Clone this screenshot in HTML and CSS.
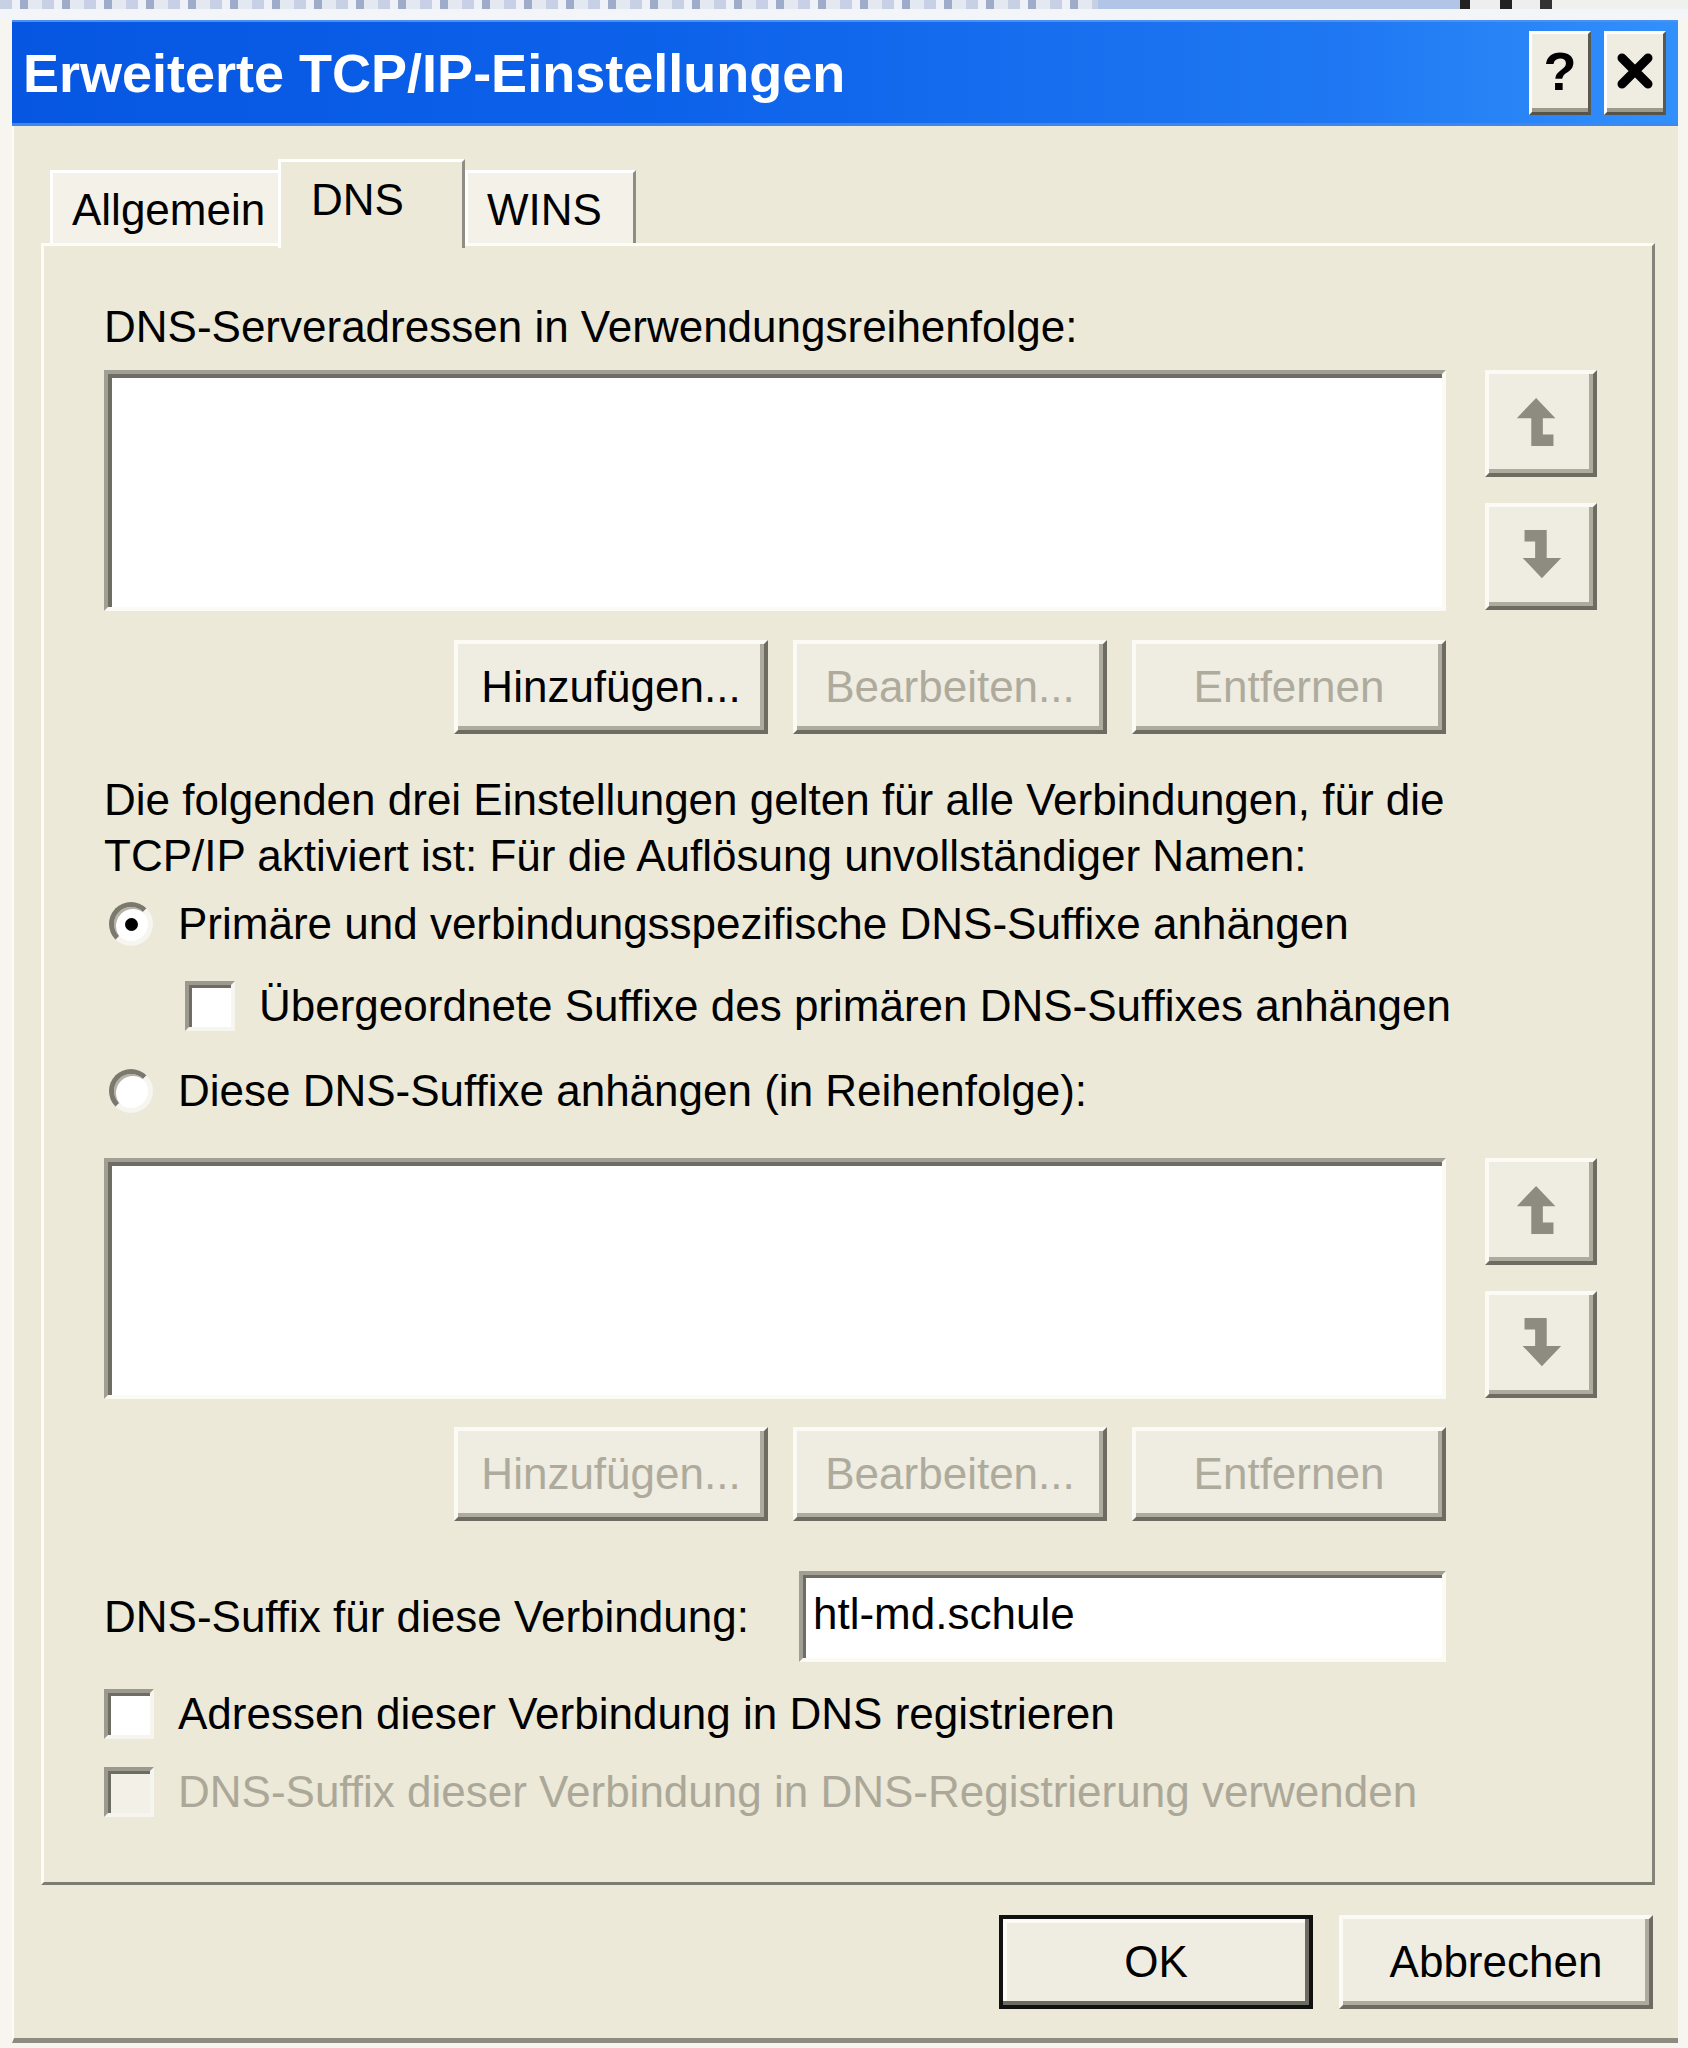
FILE: index.html
```html
<!DOCTYPE html>
<html lang="de">
<head>
<meta charset="utf-8">
<title>Erweiterte TCP/IP-Einstellungen</title>
<link rel="stylesheet" href="styles.css">
</head>
<body>
<div class="strip"><div class="strip-a"></div><div class="strip-b"></div><div class="strip-c"></div></div>
<div class="strip-gap"></div>
<div class="window">
  <div class="titlebar">
    <span class="title">Erweiterte TCP/IP-Einstellungen</span>
    <div class="tbtns">
      <div class="tbtn help">?</div>
      <div class="tbtn close">
        <svg width="38" height="36" viewBox="0 0 38 36"><path d="M6 5 L32 31 M32 5 L6 31" stroke="#000" stroke-width="9" stroke-linecap="round"/></svg>
      </div>
    </div>
  </div>
  <div class="client">
    <div class="tabs">
      <div class="tab t-allg">Allgemein</div>
      <div class="tab sel t-dns">DNS</div>
      <div class="tab t-wins">WINS</div>
    </div>
    <div class="panel">
      <div class="label">DNS-Serveradressen in Verwendungsreihenfolge:</div>
      <div class="listrow">
        <div class="listbox"></div>
        <div class="arrows">
          <div class="btn abtn"><svg width="112" height="107" viewBox="0 0 112 107"><path d="M53 29 L73 50 L60 50 L60 67 L71 67 L71 79 L48 79 L48 50 L33 50 Z" fill="#8e8c80"/></svg></div>
          <div class="btn abtn"><svg width="112" height="107" viewBox="0 0 112 107"><path d="M53 29 L73 50 L60 50 L60 67 L71 67 L71 79 L48 79 L48 50 L33 50 Z" fill="#8e8c80" transform="rotate(180 56 53.5)"/></svg></div>
        </div>
      </div>
      <div class="btnrow">
        <div class="btn">Hinzufügen...</div>
        <div class="btn dis">Bearbeiten...</div>
        <div class="btn dis">Entfernen</div>
      </div>
      <p class="para">Die folgenden drei Einstellungen gelten für alle Verbindungen, für die<br>TCP/IP aktiviert ist: Für die Auflösung unvollständiger Namen:</p>
      <div class="opt r1"><span class="radio on"></span><span>Primäre und verbindungsspezifische DNS-Suffixe anhängen</span></div>
      <div class="opt c1"><span class="cb"></span><span>Übergeordnete Suffixe des primären DNS-Suffixes anhängen</span></div>
      <div class="opt r2"><span class="radio"></span><span>Diese DNS-Suffixe anhängen (in Reihenfolge):</span></div>
      <div class="listrow lr2">
        <div class="listbox"></div>
        <div class="arrows">
          <div class="btn abtn"><svg width="112" height="107" viewBox="0 0 112 107"><path d="M53 29 L73 50 L60 50 L60 67 L71 67 L71 79 L48 79 L48 50 L33 50 Z" fill="#8e8c80"/></svg></div>
          <div class="btn abtn"><svg width="112" height="107" viewBox="0 0 112 107"><path d="M53 29 L73 50 L60 50 L60 67 L71 67 L71 79 L48 79 L48 50 L33 50 Z" fill="#8e8c80" transform="rotate(180 56 53.5)"/></svg></div>
        </div>
      </div>
      <div class="btnrow br2">
        <div class="btn dis">Hinzufügen...</div>
        <div class="btn dis">Bearbeiten...</div>
        <div class="btn dis">Entfernen</div>
      </div>
      <div class="suffixrow">
        <span>DNS-Suffix für diese Verbindung:</span>
        <div class="textbox">htl-md.schule</div>
      </div>
      <div class="opt c2"><span class="cb"></span><span>Adressen dieser Verbindung in DNS registrieren</span></div>
      <div class="opt c3 disabled"><span class="cb dcb"></span><span>DNS-Suffix dieser Verbindung in DNS-Registrierung verwenden</span></div>
    </div>
    <div class="dlgbtns">
      <div class="btn default">OK</div>
      <div class="btn">Abbrechen</div>
    </div>
  </div>
</div>
</body>
</html>
```

FILE: styles.css
```css
* { box-sizing: border-box; }
html, body { margin: 0; padding: 0; }
body {
  width: 1688px;
  height: 2048px;
  overflow: hidden;
  background: #f6f5ef;
  font-family: "Liberation Sans", Arial, sans-serif;
  font-size: 44px;
  color: #000;
}

/* window behind (partial) */
.strip { height: 9px; display: flex; }
.strip-a {
  width: 1098px;
  background: repeating-linear-gradient(90deg, #c7d0e4 0 12px, #eef1f7 12px 20px, #9eabc9 20px 28px, #e3e8f1 28px 42px);
}
.strip-b { width: 362px; background: #b2c5e7; }
.strip-c { flex: 1; background: linear-gradient(90deg, #222 0 10px, #eee 10px 40px, #222 40px 52px, #eee 52px 80px, #333 80px 92px, #f0f0ee 92px); }
.strip-gap { height: 11px; background: #f3f5f9; }

.window { margin-left: 12px; width: 1666px; }

.titlebar {
  height: 106px;
  display: flex;
  align-items: center;
  justify-content: space-between;
  padding: 0 12px 0 11px;
  background: linear-gradient(90deg, #0656e1 0%, #0d62ea 40%, #1f78f2 80%, #3290fb 100%);
  border-top: 2px solid #4d8ff0;
  border-bottom: 3px solid #3f86ef;
}
.title {
  color: #fff;
  font-weight: bold;
  font-size: 54px;
  letter-spacing: 0;
}
.tbtns { display: flex; gap: 13px; }
.tbtn {
  width: 62px;
  height: 84px;
  background: #efece1;
  border: 3px solid;
  border-color: #ffffff #5b594f #55534a #ffffff;
  box-shadow: inset 0 -4px 0 #9d9a8c;
  display: flex;
  align-items: center;
  justify-content: center;
}
.help { font-weight: bold; font-size: 54px; line-height: 1; padding-bottom: 4px; }
.close { padding-bottom: 4px; }

.client {
  height: 1917px;
  background: #ece9d8;
  padding: 33px 25px 0 27px;
  border-bottom: 5px solid #8e8c80;
  border-left: 2px solid #fdfcf8;
}

/* tabs */
.tabs {
  display: flex;
  align-items: flex-end;
  height: 84px;
  margin-left: 9px;
  position: relative;
  z-index: 2;
}
.tab {
  height: 73px;
  background: #f3f1e8;
  border-top: 3px solid #ffffff;
  border-left: 3px solid #ffffff;
  border-right: 3px solid #8f8e84;
  display: flex;
  align-items: center;
  padding-top: 4px;
}
.t-allg { width: 228px; padding-left: 19px; border-right: none; }
.t-dns { width: 187px; padding-left: 30px; }
.t-wins { width: 171px; padding-left: 19px; }
.tab.sel {
  height: 89px;
  margin-bottom: -5px;
  background: #ece9d8;
  padding-top: 0;
  padding-bottom: 10px;
}

.panel {
  width: 1614px;
  height: 1642px;
  background: #ece9d8;
  border: 3px solid;
  border-color: #fdfcf7 #85847a #7d7c72 #fdfcf7;
  padding: 53px 0 0 60px;
  position: relative;
  z-index: 1;
}

.label { line-height: 56px; height: 56px; }

.listrow { display: flex; margin-top: 15px; align-items: flex-start; }
.listrow.lr2 { margin-top: 39px; }
.listbox {
  width: 1342px;
  height: 241px;
  background: #fff;
  border: 4px solid;
  border-color: #a19f93 #fbfaf4 #fbfaf4 #a19f93;
  box-shadow: inset 4px 4px 0 #6f6d63;
}
.arrows {
  margin-left: 39px;
  display: flex;
  flex-direction: column;
  gap: 26px;
}

.btn {
  width: 314px;
  height: 94px;
  display: flex;
  align-items: center;
  justify-content: center;
  background: #efece2;
  border: 4px solid;
  border-color: #fbfaf5 #6e6c62 #6e6c62 #fbfaf5;
  box-shadow: inset -4px -4px 0 #aeab9e;
  line-height: 1;
}
.btn.dis { color: #aeab9d; }
.abtn { width: 112px; height: 107px; }
.abtn svg { display: block; margin: -4px 0 0 -4px; }

.btnrow {
  width: 1342px;
  display: flex;
  justify-content: flex-end;
  gap: 25px;
  margin-top: 29px;
}
.btnrow.br2 { margin-top: 28px; }

.para {
  margin: 38px 0 0 0;
  line-height: 56px;
}

.opt {
  display: flex;
  align-items: center;
  height: 56px;
  line-height: 56px;
}
.r1 { margin-top: 12px; }
.c1 { margin-top: 26px; padding-left: 81px; }
.r2 { margin-top: 29px; }
.c2 { margin-top: 24px; }
.c3 { margin-top: 22px; }
.disabled { color: #aca899; }

.radio {
  width: 44px;
  height: 44px;
  margin-left: 5px;
  margin-right: 25px;
  border-radius: 50%;
  background: #fff;
  border: 5px solid;
  border-color: #7b796e #f6f5ef #f6f5ef #7b796e;
  box-shadow: inset 2px 2px 0 #b5b2a6;
  display: flex;
  align-items: center;
  justify-content: center;
  flex: none;
}
.radio.on::after {
  content: "";
  width: 13px;
  height: 13px;
  border-radius: 50%;
  background: #000;
}

.cb {
  width: 50px;
  height: 50px;
  margin-right: 24px;
  background: #fff;
  border: 4px solid;
  border-color: #9c9a8e #f6f5ef #f6f5ef #9c9a8e;
  box-shadow: inset 3px 3px 0 #6f6d63;
  flex: none;
}
.cb.dcb { background: #f2f0e7; }

.suffixrow {
  width: 1342px;
  margin-top: 50px;
  display: flex;
  align-items: center;
  justify-content: space-between;
}
.textbox {
  width: 647px;
  height: 91px;
  background: #fff;
  border: 4px solid;
  border-color: #a19f93 #fbfaf4 #fbfaf4 #a19f93;
  box-shadow: inset 3px 3px 0 #6f6d63;
  display: flex;
  align-items: center;
  padding-left: 10px;
  padding-bottom: 6px;
}

.dlgbtns {
  display: flex;
  justify-content: flex-end;
  gap: 26px;
  margin-top: 30px;
}
.btn.default {
  border: 4px solid #111;
  box-shadow: inset -4px -4px 0 #6e6c62, inset 4px 4px 0 #fbfaf5;
}
```
